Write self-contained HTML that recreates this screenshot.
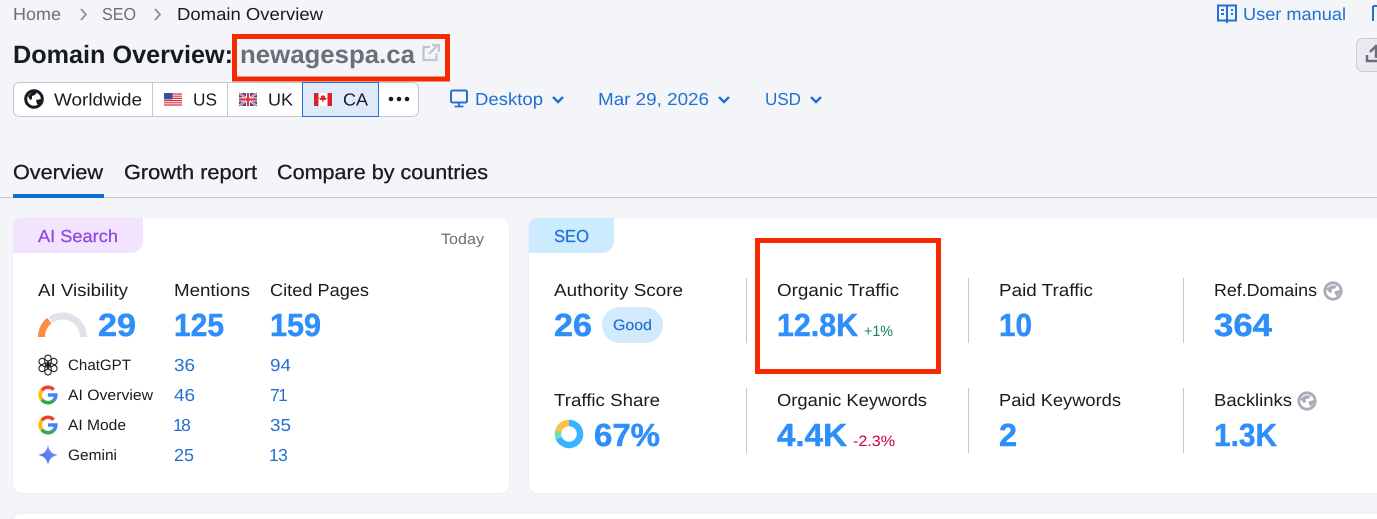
<!DOCTYPE html>
<html lang="en"><head><meta charset="utf-8"><title>Domain Overview</title>
<style>
html,body{margin:0;padding:0;width:1377px;height:519px;overflow:hidden;background:#f4f5f9}
svg{display:block}
text{font-family:"Liberation Sans",sans-serif;text-rendering:geometricPrecision}
.l{font-size:17.4px;fill:#191b23}
.g{font-size:17.4px;fill:#6c6e79}
.b{font-size:17.4px;fill:#2370d3}
.n{font-size:32px;font-weight:700;fill:#2e8ffa;stroke:#2e8ffa;stroke-width:.5}
.s{font-size:15px;fill:#191b23}
.v{font-size:17.4px;fill:#2370d3}
.t{font-size:20.4px;fill:#191b23;stroke:#191b23;stroke-width:.3}
</style></head><body>
<svg width="1377" height="519" viewBox="0 0 1377 519" xmlns="http://www.w3.org/2000/svg">
<defs>
<linearGradient id="gem" x1="0" y1="1" x2="1" y2="0"><stop offset="0" stop-color="#1a73e8"/><stop offset="1" stop-color="#a78bfa"/></linearGradient>
<g id="globe"><circle cx="10" cy="10" r="8.2" fill="none" stroke="#a9abb6" stroke-width="2.8"/><path d="M3 8l5-3.500h6l-2 3-3.500 .5 .5 3-2 1zM11.500 10.500l5.500-1.500 .5 1.500-3.500 5-1.500-1.500z" fill="#a9abb6"/></g>
<g id="gg" fill="none" stroke-width="3.600"><path d="M3.900 5.200A7.800 7.800 0 0 1 15.700 4.700" stroke="#ea4335"/><path d="M3.900 5.200A7.800 7.800 0 0 0 3.900 14.800" stroke="#fbbc05"/><path d="M3.900 14.800A7.800 7.800 0 0 0 15.500 15.500" stroke="#34a853"/><path d="M15.500 15.500A7.800 7.800 0 0 0 17.800 10H10" stroke="#4285f4"/></g>
</defs>
<rect width="1377" height="519" fill="#f4f5f9"/>

<!-- breadcrumb -->
<text x="13" y="20" class="g" textLength="48" lengthAdjust="spacingAndGlyphs">Home</text>
<path d="M81 9l5 5.500-5 5.500" fill="none" stroke="#8f919c" stroke-width="1.800"/>
<text x="102" y="20" class="g" textLength="34" lengthAdjust="spacingAndGlyphs">SEO</text>
<path d="M155 9l5 5.500-5 5.500" fill="none" stroke="#8f919c" stroke-width="1.800"/>
<text x="177" y="20" class="l" textLength="146" lengthAdjust="spacingAndGlyphs">Domain Overview</text>

<!-- user manual -->
<g fill="none" stroke="#2370d3" stroke-width="2"><path d="M1218 5.500h8l1 1 1-1h8v15h-8l-1 1.500-1-1.500h-8z"/><path d="M1227 6.500v15"/></g>
<path d="M1221 10h3M1221 14h3M1231 10h2M1231 14h2" stroke="#2370d3" stroke-width="2"/>
<text x="1243" y="20" class="b" textLength="103" lengthAdjust="spacingAndGlyphs">User manual</text>
<path d="M1373 6h4M1373 6v15" stroke="#2370d3" stroke-width="2" fill="none"/>

<!-- title -->
<text x="13" y="63" font-size="25" font-weight="700" fill="#191b23" textLength="220" lengthAdjust="spacingAndGlyphs">Domain Overview:</text>
<text x="240" y="63" font-size="25" font-weight="700" fill="#6c6e79" textLength="175" lengthAdjust="spacingAndGlyphs">newagespa.ca</text>
<path d="M430 47h-6.500v13h13v-6.500" fill="none" stroke="#c3c5ce" stroke-width="2.200"/><path d="M429 54l9-9M432 45h7v7" fill="none" stroke="#c3c5ce" stroke-width="2.200"/>
<rect x="1356.500" y="38.500" width="40" height="33" rx="6" fill="#e9eaf2" stroke="#c9cbd4"/>
<path d="M1370 52l6-6 6 6M1376 47v11" fill="none" stroke="#6c6e79" stroke-width="2.500"/><path d="M1367 55v6h20" fill="none" stroke="#6c6e79" stroke-width="2.500"/>

<!-- database selector -->
<rect x="13.500" y="82.500" width="405" height="34" rx="6" fill="#fff" stroke="#c4c7cf"/>
<path d="M152.500 83v33M227.500 83v33" stroke="#c4c7cf"/>
<rect x="302.500" y="82.500" width="76" height="34" fill="#deeafa" stroke="#2370d3"/>
<circle cx="34" cy="99" r="8.300" fill="none" stroke="#191b23" stroke-width="3"/>
<path d="M28 96l4-4h5l-2 3-3 1v3l-2 1zM36 100l5-1 1 1-3 5-2-1z" fill="#191b23"/>
<text x="54" y="105.500" class="l" textLength="88" lengthAdjust="spacingAndGlyphs">Worldwide</text>

<rect x="164" y="93" width="18" height="13" fill="#fff"/>
<path d="M164 94h18M164 96.200h18M164 98.400h18M164 100.600h18M164 102.800h18M164 105h18" stroke="#d8313f" stroke-width="1.200"/>
<rect x="164" y="93" width="8.500" height="6.500" fill="#3c4f9c"/>
<text x="193" y="105.500" class="l" textLength="24" lengthAdjust="spacingAndGlyphs">US</text>

<rect x="239" y="93" width="18" height="13" fill="#3c4a8f"/>
<path d="M239 93l18 13M257 93l-18 13" stroke="#fff" stroke-width="2.200"/>
<path d="M239 93l18 13M257 93l-18 13" stroke="#d8313f" stroke-width=".8"/>
<path d="M248 93v13M239 99.500h18" stroke="#fff" stroke-width="4"/>
<path d="M248 93v13M239 99.500h18" stroke="#d8313f" stroke-width="2.200"/>
<text x="268" y="105.500" class="l" textLength="25" lengthAdjust="spacingAndGlyphs">UK</text>

<rect x="314" y="93" width="18" height="13" fill="#fff"/>
<rect x="314" y="93" width="4.500" height="13" fill="#d8232f"/><rect x="327.500" y="93" width="4.500" height="13" fill="#d8232f"/>
<path d="M323 94.500l1 1.800 1.300-.5-.4 2.300 1.500-.6.300 1-.8 1.200-2.400.7v1.600h-1v-1.600l-2.400-.7-.8-1.200.3-1 1.500.6-.4-2.300 1.300.5z" fill="#d8232f"/>
<text x="343" y="105.500" class="l" textLength="25" lengthAdjust="spacingAndGlyphs">CA</text>
<circle cx="391" cy="99" r="2.300" fill="#191b23"/><circle cx="399" cy="99" r="2.300" fill="#191b23"/><circle cx="407" cy="99" r="2.300" fill="#191b23"/>

<!-- filters -->
<rect x="451" y="90.500" width="16" height="12" rx="1.500" fill="none" stroke="#2370d3" stroke-width="2"/>
<path d="M459 103v3M454.500 106.500h9" stroke="#2370d3" stroke-width="1.800"/>
<text x="475" y="105" class="b" textLength="68" lengthAdjust="spacingAndGlyphs">Desktop</text>
<path d="M553 97l5 5 5-5" fill="none" stroke="#2370d3" stroke-width="2.400"/>
<text x="598" y="105" class="b" textLength="111" lengthAdjust="spacingAndGlyphs">Mar 29, 2026</text>
<path d="M719 97l5 5 5-5" fill="none" stroke="#2370d3" stroke-width="2.400"/>
<text x="765" y="105" class="b" textLength="36" lengthAdjust="spacingAndGlyphs">USD</text>
<path d="M811 97l5 5 5-5" fill="none" stroke="#2370d3" stroke-width="2.400"/>

<!-- tabs -->
<text x="13" y="179" class="t" textLength="90" lengthAdjust="spacingAndGlyphs">Overview</text>
<text x="124" y="179" class="t" textLength="133" lengthAdjust="spacingAndGlyphs">Growth report</text>
<text x="277" y="179" class="t" textLength="211" lengthAdjust="spacingAndGlyphs">Compare by countries</text>
<rect x="0" y="197" width="1377" height="1" fill="#c4c7cf"/>
<rect x="13" y="194" width="91" height="4" fill="#0f6ccf"/>

<!-- AI card -->
<rect x="12.500" y="217.500" width="497" height="276" rx="8" fill="#e9eaf0"/>
<rect x="13" y="218" width="496" height="275" rx="8" fill="#fff"/>
<path d="M13 226a8 8 0 0 1 8-8h122v23a12 12 0 0 1-12 12H13z" fill="#f2e3fe"/>
<text x="38" y="242" font-size="17.400" fill="#8f47e0" stroke="#8f47e0" stroke-width=".25" textLength="80" lengthAdjust="spacingAndGlyphs">AI Search</text>
<text x="441" y="244" font-size="15" fill="#6c6e79" textLength="43" lengthAdjust="spacingAndGlyphs">Today</text>

<text x="38" y="296" class="l" textLength="90" lengthAdjust="spacingAndGlyphs">AI Visibility</text>
<text x="174" y="296" class="l" textLength="76" lengthAdjust="spacingAndGlyphs">Mentions</text>
<text x="270" y="296" class="l" textLength="99" lengthAdjust="spacingAndGlyphs">Cited Pages</text>

<path d="M50.500 319.800A21 21 0 0 1 83.500 337" fill="none" stroke="#e0e1e9" stroke-width="7"/>
<path d="M41.500 337A21 21 0 0 1 49.400 320.500" fill="none" stroke="#ff8c43" stroke-width="7"/>
<text x="98" y="336" class="n" textLength="38" lengthAdjust="spacingAndGlyphs">29</text>
<text x="174" y="336" class="n" textLength="50" lengthAdjust="spacingAndGlyphs">125</text>
<text x="270" y="336" class="n" textLength="51" lengthAdjust="spacingAndGlyphs">159</text>

<!-- ChatGPT knot -->
<g transform="translate(48 365)" fill="none" stroke="#191b23" stroke-width="1.100">
<rect x="-3.200" y="-10" width="6.400" height="10.500" rx="3.200"/>
<rect x="-3.200" y="-10" width="6.400" height="10.500" rx="3.200" transform="rotate(60)"/>
<rect x="-3.200" y="-10" width="6.400" height="10.500" rx="3.200" transform="rotate(120)"/>
<rect x="-3.200" y="-10" width="6.400" height="10.500" rx="3.200" transform="rotate(180)"/>
<rect x="-3.200" y="-10" width="6.400" height="10.500" rx="3.200" transform="rotate(240)"/>
<rect x="-3.200" y="-10" width="6.400" height="10.500" rx="3.200" transform="rotate(300)"/>
</g>
<use href="#gg" x="38" y="385"/>
<use href="#gg" x="38" y="415"/>
<path d="M48 445c1 6 4 9 10 10-6 1-9 4-10 10-1-6-4-9-10-10 6-1 9-4 10-10z" fill="url(#gem)"/>

<text x="68" y="370" class="s" textLength="63" lengthAdjust="spacingAndGlyphs">ChatGPT</text>
<text x="68" y="400" class="s" textLength="85" lengthAdjust="spacingAndGlyphs">AI Overview</text>
<text x="68" y="430" class="s" textLength="58" lengthAdjust="spacingAndGlyphs">AI Mode</text>
<text x="68" y="460" class="s" textLength="49" lengthAdjust="spacingAndGlyphs">Gemini</text>

<text x="174" y="371" class="v" textLength="21" lengthAdjust="spacingAndGlyphs">36</text>
<text x="270" y="371" class="v" textLength="21" lengthAdjust="spacingAndGlyphs">94</text>
<text x="174" y="401" class="v" textLength="21" lengthAdjust="spacingAndGlyphs">46</text>
<text x="270" y="401" class="v" letter-spacing="-1.500">71</text>
<text x="173" y="431" class="v" letter-spacing="-1.500">18</text>
<text x="270" y="431" class="v" textLength="21" lengthAdjust="spacingAndGlyphs">35</text>
<text x="174" y="461" class="v" textLength="20" lengthAdjust="spacingAndGlyphs">25</text>
<text x="269" y="461" class="v" letter-spacing="-.5">13</text>

<!-- SEO card -->
<rect x="528.500" y="217.500" width="900" height="276" rx="8" fill="#e9eaf0"/>
<rect x="529" y="218" width="900" height="275" rx="8" fill="#fff"/>
<path d="M529 226a8 8 0 0 1 8-8h77v23a12 12 0 0 1-12 12H529z" fill="#cdebff"/>
<text x="554" y="242" font-size="17.400" fill="#2370d3" stroke="#2370d3" stroke-width=".25" textLength="35" lengthAdjust="spacingAndGlyphs">SEO</text>

<path d="M746.500 278v65M968.500 278v65M1183.500 278v65M746.500 388v65M968.500 388v65M1183.500 388v65" stroke="#c4c7cf"/>

<text x="554" y="296" class="l" textLength="129" lengthAdjust="spacingAndGlyphs">Authority Score</text>
<text x="554" y="336" class="n" textLength="38" lengthAdjust="spacingAndGlyphs">26</text>
<rect x="602" y="307" width="61" height="36" rx="18" fill="#d3e9fd"/>
<text x="613" y="330" font-size="15" fill="#2370d3" stroke="#2370d3" stroke-width=".2" textLength="39" lengthAdjust="spacingAndGlyphs">Good</text>

<text x="777" y="296" class="l" textLength="122" lengthAdjust="spacingAndGlyphs">Organic Traffic</text>
<text x="777" y="336" class="n" textLength="81" lengthAdjust="spacingAndGlyphs">12.8K</text>
<text x="864" y="336" font-size="15" fill="#1a7f5a" textLength="29" lengthAdjust="spacingAndGlyphs">+1%</text>

<text x="999" y="296" class="l" textLength="94" lengthAdjust="spacingAndGlyphs">Paid Traffic</text>
<text x="999" y="336" class="n" textLength="33" lengthAdjust="spacingAndGlyphs">10</text>

<text x="1214" y="296" class="l" textLength="103" lengthAdjust="spacingAndGlyphs">Ref.Domains</text>
<use href="#globe" x="1323" y="281"/>
<text x="1214" y="336" class="n" textLength="58" lengthAdjust="spacingAndGlyphs">364</text>

<text x="554" y="406" class="l" textLength="106" lengthAdjust="spacingAndGlyphs">Traffic Share</text>
<g fill="none" stroke-width="6.500">
<path d="M569 423A11 11 0 1 1 558.800 438" stroke="#36b4ff"/>
<path d="M558.800 438A11 11 0 0 1 558.300 431" stroke="#6fdfae"/>
<path d="M558.300 431A11 11 0 0 1 569 423" stroke="#ffc043"/>
</g>
<text x="594" y="446" class="n" textLength="66" lengthAdjust="spacingAndGlyphs">67%</text>

<text x="777" y="406" class="l" textLength="150" lengthAdjust="spacingAndGlyphs">Organic Keywords</text>
<text x="777" y="446" class="n" textLength="70" lengthAdjust="spacingAndGlyphs">4.4K</text>
<text x="853" y="446" font-size="15" fill="#d1003f" textLength="42" lengthAdjust="spacingAndGlyphs">-2.3%</text>

<text x="999" y="406" class="l" textLength="122" lengthAdjust="spacingAndGlyphs">Paid Keywords</text>
<text x="999" y="446" class="n" textLength="18" lengthAdjust="spacingAndGlyphs">2</text>

<text x="1214" y="406" class="l" textLength="78" lengthAdjust="spacingAndGlyphs">Backlinks</text>
<use href="#globe" x="1297" y="391"/>
<text x="1214" y="446" class="n" textLength="63" lengthAdjust="spacingAndGlyphs">1.3K</text>

<!-- bottom card -->
<rect x="13" y="513" width="1400" height="20" rx="8" fill="#fff" stroke="#e9eaf0"/>

<!-- red annotations -->
<rect x="234.500" y="36.500" width="213" height="42.500" fill="none" stroke="#f52a00" stroke-width="5"/>
<rect x="757.500" y="240.500" width="181" height="131" fill="none" stroke="#f52a00" stroke-width="5"/>
</svg>
</body></html>
